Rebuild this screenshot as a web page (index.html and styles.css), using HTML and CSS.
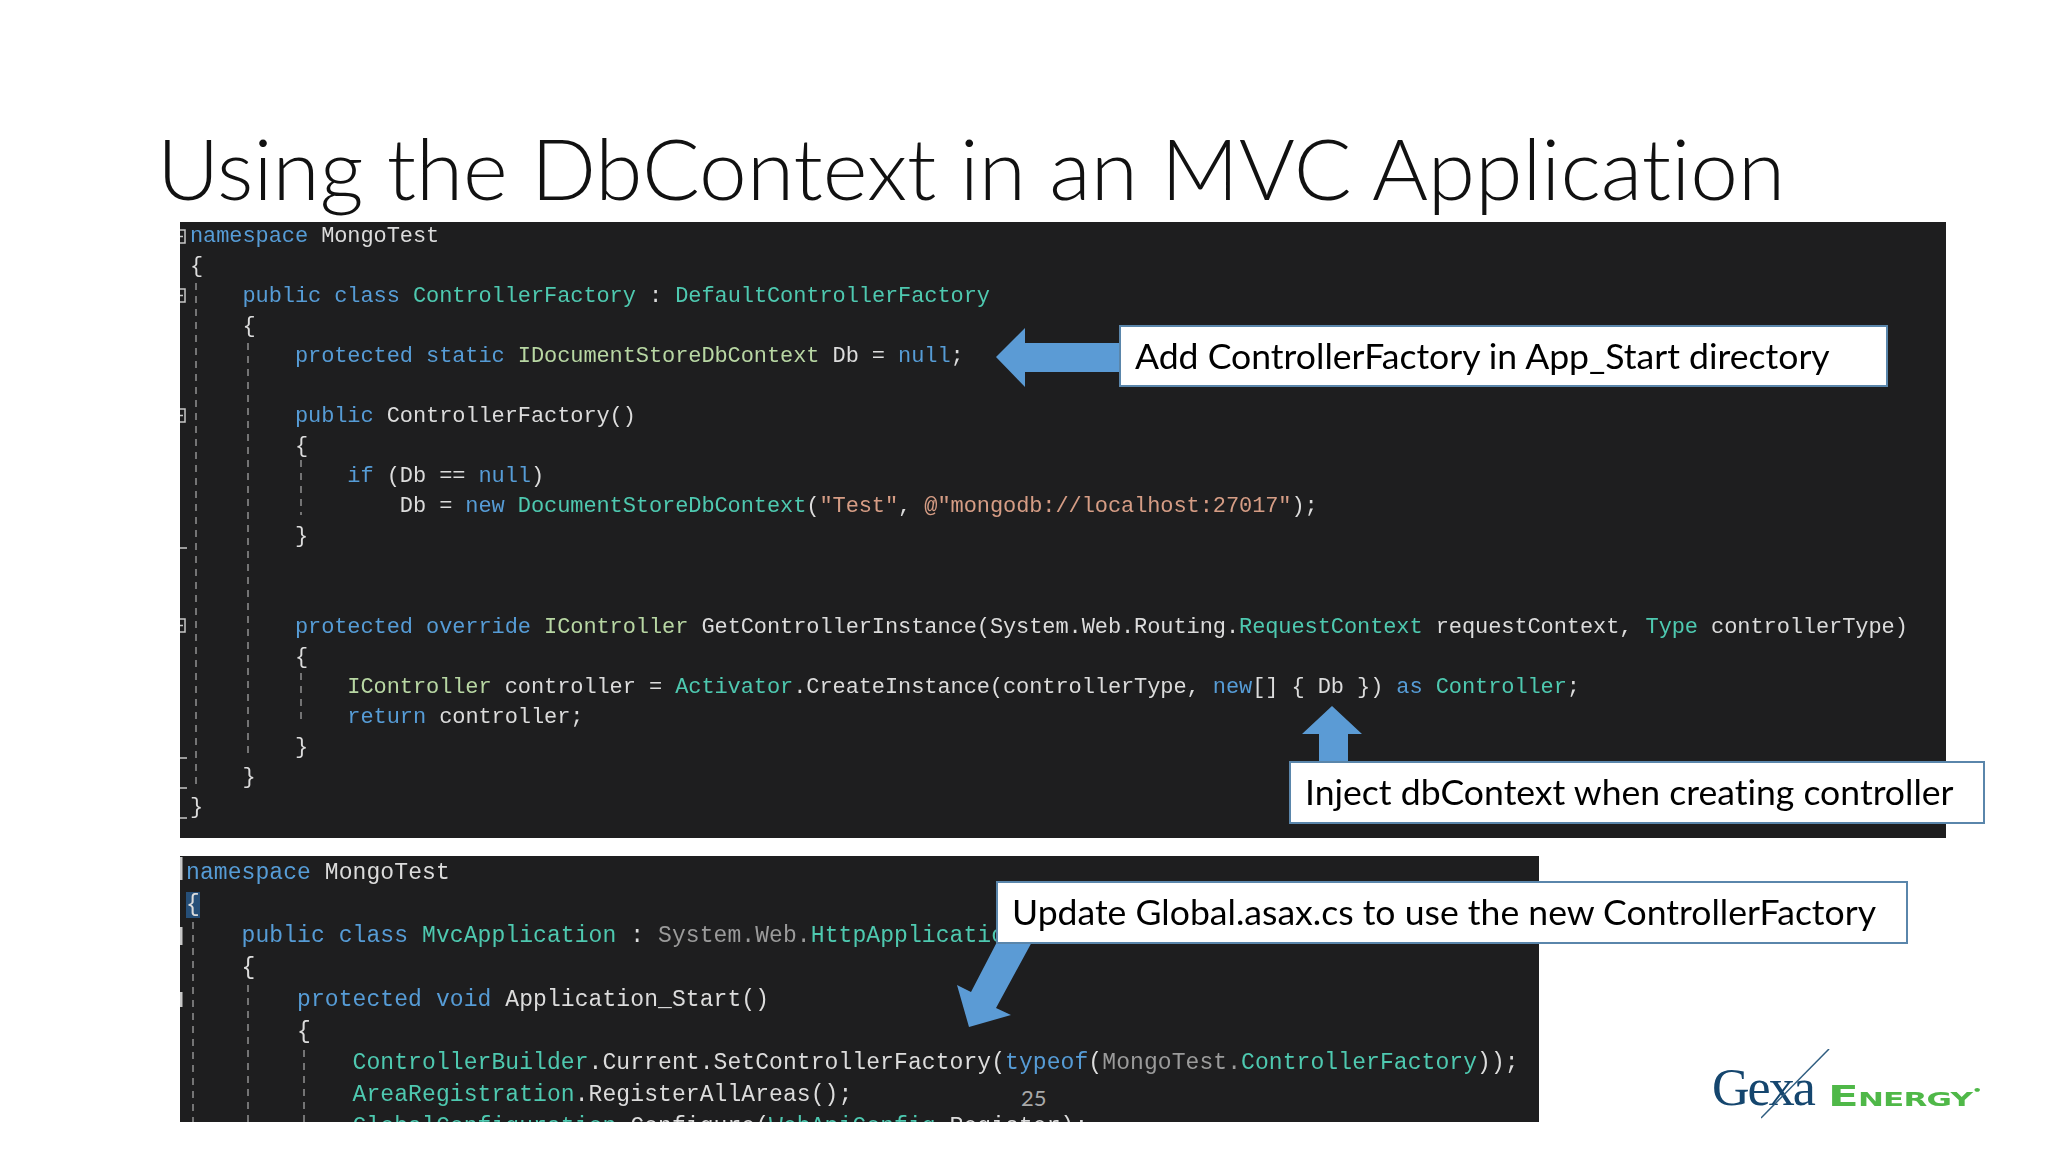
FILE: index.html
```html
<!DOCTYPE html>
<html lang="en">
<head>
<meta charset="utf-8">
<title>Using the DbContext in an MVC Application</title>
<link rel="stylesheet" href="styles.css">
</head>
<body>
<main class="slide">
<h1 class="title">Using the DbContext in an MVC Application</h1>
<section class="panel panel-top">
<svg class="gutter" width="1766" height="616" viewBox="0 0 1766 616">
<path class="guide" d="M16 61V568M68 121V533M121 238V293M121 451V503"/>
<path class="fold" d="M0 8H5V21H0M0 14.500H3M0 67H5V80H0M0 73.500H3M0 187H5V200H0M0 193.500H3M0 397H5V410H0M0 403.500H3M0 326H7M0 536H7M0 566H7M0 596H7"/>
</svg>
<pre class="code code-top"><span class="k">namespace</span> MongoTest
{
    <span class="k">public class</span> <span class="t">ControllerFactory</span> : <span class="t">DefaultControllerFactory</span>
    {
        <span class="k">protected static</span> <span class="i">IDocumentStoreDbContext</span> Db = <span class="k">null</span>;

        <span class="k">public</span> ControllerFactory()
        {
            <span class="k">if</span> (Db == <span class="k">null</span>)
                Db = <span class="k">new</span> <span class="t">DocumentStoreDbContext</span>(<span class="s">"Test"</span>, <span class="s">@"mongodb://localhost:27017"</span>);
        }


        <span class="k">protected override</span> <span class="i">IController</span> GetControllerInstance(System.Web.Routing.<span class="t">RequestContext</span> requestContext, <span class="t">Type</span> controllerType)
        {
            <span class="i">IController</span> controller = <span class="t">Activator</span>.CreateInstance(controllerType, <span class="k">new</span>[] { Db }) <span class="k">as</span> <span class="t">Controller</span>;
            <span class="k">return</span> controller;
        }
    }
}</pre>
</section>
<section class="panel panel-bottom">
<svg class="gutter" width="1359" height="266" viewBox="0 0 1359 266">
<path class="guide" d="M13 66V266M68 129V266M124 194V266"/>
<path class="fold fold-wide" d="M1 1V24M1 71V89M1 136V151"/>
</svg>
<pre class="code code-bottom"><span class="k">namespace</span> MongoTest
<span class="sel">{</span>
    <span class="k">public class</span> <span class="t">MvcApplication</span> : <span class="d">System.Web.</span><span class="t">HttpApplication</span>
    {
        <span class="k">protected void</span> Application_Start()
        {
            <span class="t">ControllerBuilder</span>.Current.SetControllerFactory(<span class="k">typeof</span>(<span class="d">MongoTest.</span><span class="t">ControllerFactory</span>));
            <span class="t">AreaRegistration</span>.RegisterAllAreas();
            <span class="t">GlobalConfiguration</span>.Configure(<span class="t">WebApiConfig</span>.Register);</pre>
</section>
<svg class="arrows" width="2048" height="1152" viewBox="0 0 2048 1152">
<polygon points="996,357 1025,328 1025,343 1125,343 1125,372 1025,372 1025,387"/>
<polygon points="1332,706 1362,734 1348,734 1348,765 1319,765 1319,734 1302,734"/>
<polygon points="998,940 1033,940 996,1008 1011,1015 969,1027 957,985 971,992"/>
</svg>
<p class="callout callout-add">Add ControllerFactory in App_Start directory</p>
<p class="callout callout-inject">Inject dbContext when creating controller</p>
<p class="callout callout-update">Update Global.asax.cs to use the new ControllerFactory</p>
<span class="page-number">25</span>
<div class="logo">
<svg class="logo-slash" width="70" height="70" viewBox="0 0 70 70"><path d="M68 0L0 69"/></svg>
<span class="logo-gexa">Gexa</span><span class="logo-energy">Energy<sup class="logo-mark">•</sup></span>
</div>
</main>
</body>
</html>
```
FILE: styles.css
```css
* { box-sizing: border-box; }
html, body { margin: 0; padding: 0; background: #fff; }
.slide {
  position: relative;
  width: 2048px;
  height: 1152px;
  overflow: hidden;
  background: #fff;
  padding-left: 180px;
  display: flex;
  flex-direction: column;
  align-items: flex-start;
}
.title {
  margin: 0 0 0 -23px;
  height: 222px;
  padding-top: 113px;
  font: 300 85.7px/108px Lato, sans-serif;
  font-variant-ligatures: none;
  color: #111;
  white-space: nowrap;
  filter: blur(0.3px);
}
.panel {
  position: relative;
  overflow: hidden;
  background: #1e1e1f;
  flex: none;
}
.panel-top { width: 1766px; height: 616px; }
.panel-bottom { width: 1359px; height: 266px; margin-top: 18px; }
.gutter { position: absolute; left: 0; top: 0; }
.guide { fill: none; stroke: #8a8a8a; stroke-width: 1.6; stroke-dasharray: 7 6; }
.fold { fill: none; stroke: #c8c8c8; stroke-width: 1.5; }
.fold-wide { stroke-width: 3; }
.code {
  margin: 0;
  font-family: "Liberation Mono", monospace;
  color: #dcdcdc;
  filter: blur(0.45px);
}
.code-top {
  font-size: 22px;
  letter-spacing: -0.09px;
  line-height: 30.05px;
  padding: 0 0 0 10px;
}
.code-bottom {
  font-size: 23px;
  letter-spacing: 0.08px;
  line-height: 31.7px;
  padding: 2px 0 0 6px;
}
.k { color: #569cd6; }
.t { color: #4ec9b0; }
.i { color: #b8d7a3; }
.s { color: #d69d85; }
.d { color: #9b9b9b; }
.sel { background: #264f78; }
.arrows { position: absolute; left: 0; top: 0; }
.arrows polygon { fill: #5b9bd5; }
.callout {
  position: absolute;
  margin: 0;
  background: #fff;
  border: 2px solid #5a86ab;
  padding-left: 14px;
  font: 400 35.6px/57px Lato, sans-serif;
  font-variant-ligatures: none;
  color: #000;
  white-space: nowrap;
  filter: blur(0.3px);
}
.callout-add { left: 1119px; top: 325px; width: 769px; height: 62px; }
.callout-inject { left: 1289px; top: 761px; width: 696px; height: 63px; }
.callout-update { left: 996px; top: 881px; width: 912px; height: 63px; }
.page-number {
  position: absolute;
  left: 1021px;
  top: 1084px;
  font: 400 22px/28px Lato, sans-serif;
  color: #a9a9a9;
}
.logo {
  position: absolute;
  left: 1712px;
  top: 1049px;
  width: 275px;
  height: 70px;
  display: flex;
  align-items: flex-end;
  filter: blur(0.5px);
}
.logo-slash { position: absolute; left: 49px; top: 0; }
.logo-slash path { fill: none; stroke: #2f5d80; stroke-width: 1.5; }
.logo-gexa {
  font: 400 52px/62px "Liberation Serif", serif;
  letter-spacing: -2px;
  color: #15466e;
}
.logo-energy {
  margin-left: 14px;
  margin-bottom: 8px;
  font: 700 29px/30px "DejaVu Sans", sans-serif;
  font-variant: small-caps;
  letter-spacing: -0.5px;
  color: #4fb848;
  transform: scaleX(1.55);
  transform-origin: left bottom;
}
.logo-mark { font-size: 10px; line-height: 0; vertical-align: 12px; }
```
